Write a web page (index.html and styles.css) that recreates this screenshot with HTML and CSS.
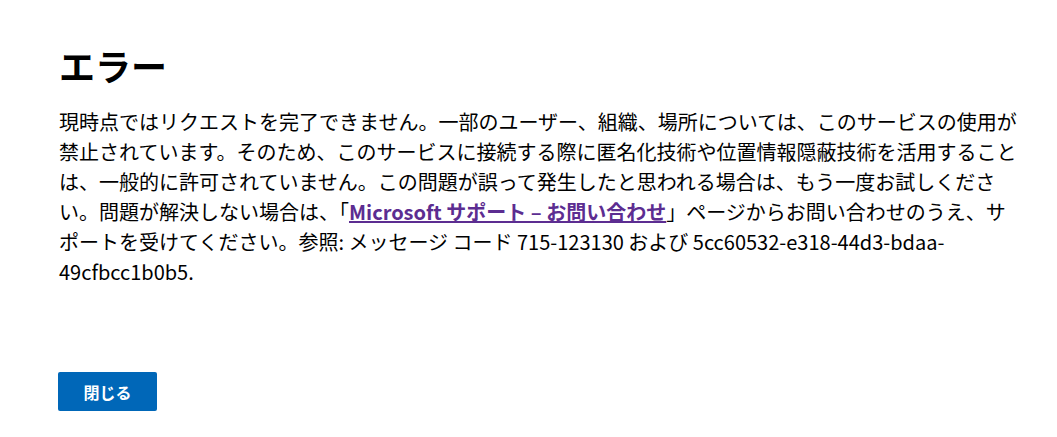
FILE: index.html
```html
<!DOCTYPE html>
<html lang="ja">
<head>
<meta charset="utf-8">
<link rel="stylesheet" href="styles.css">
</head>
<body>
<main class="page">
  <h1 class="title">エラー</h1>
  <p class="message">現時点ではリクエストを完了できません。一部のユーザー、組織、場所については、このサービスの使用が禁止されています。そのため、このサービスに接続する際に匿名化技術や位置情報隠蔽技術を活用することは、一般的に許可されていません。この問題が誤って発生したと思われる場合は、もう一度お試しください。問題が解決しない場合は、「<a class="link" href="#">Microsoft サポート – お問い合わせ</a>」ページからお問い合わせのうえ、サポートを受けてください。参照: メッセージ コード 715-123130 および 5cc60532-e318-44d3-bdaa-49cfbcc1b0b5.</p>
  <div class="actions">
    <button class="close-btn" type="button">閉じる</button>
  </div>
</main>
</body>
</html>
```
FILE: styles.css
```css
html, body {
  margin: 0;
  padding: 0;
  background: #ffffff;
}
body {
  font-family: "Noto Sans CJK JP", "Noto Sans", sans-serif;
  color: #000000;
}
.page {
  padding: 40px 0 0 59px;
  width: 962px;
}
.title {
  margin: 0;
  font-size: 36px;
  line-height: 50px;
  font-weight: 700;
}
.message {
  margin: 17px 0 0;
  font-size: 20px;
  line-height: 30px;
}
.link {
  color: #5c2d91;
  font-weight: 700;
  text-decoration: underline;
}
.actions {
  margin-top: 85px;
}
.close-btn {
  width: 99px;
  height: 39px;
  border: none;
  border-radius: 2px;
  background: #0067b8;
  color: #ffffff;
  font-family: "Noto Sans CJK JP", sans-serif;
  font-weight: 700;
  font-size: 16px;
  padding: 0;
  margin-left: -1px;
}
```
